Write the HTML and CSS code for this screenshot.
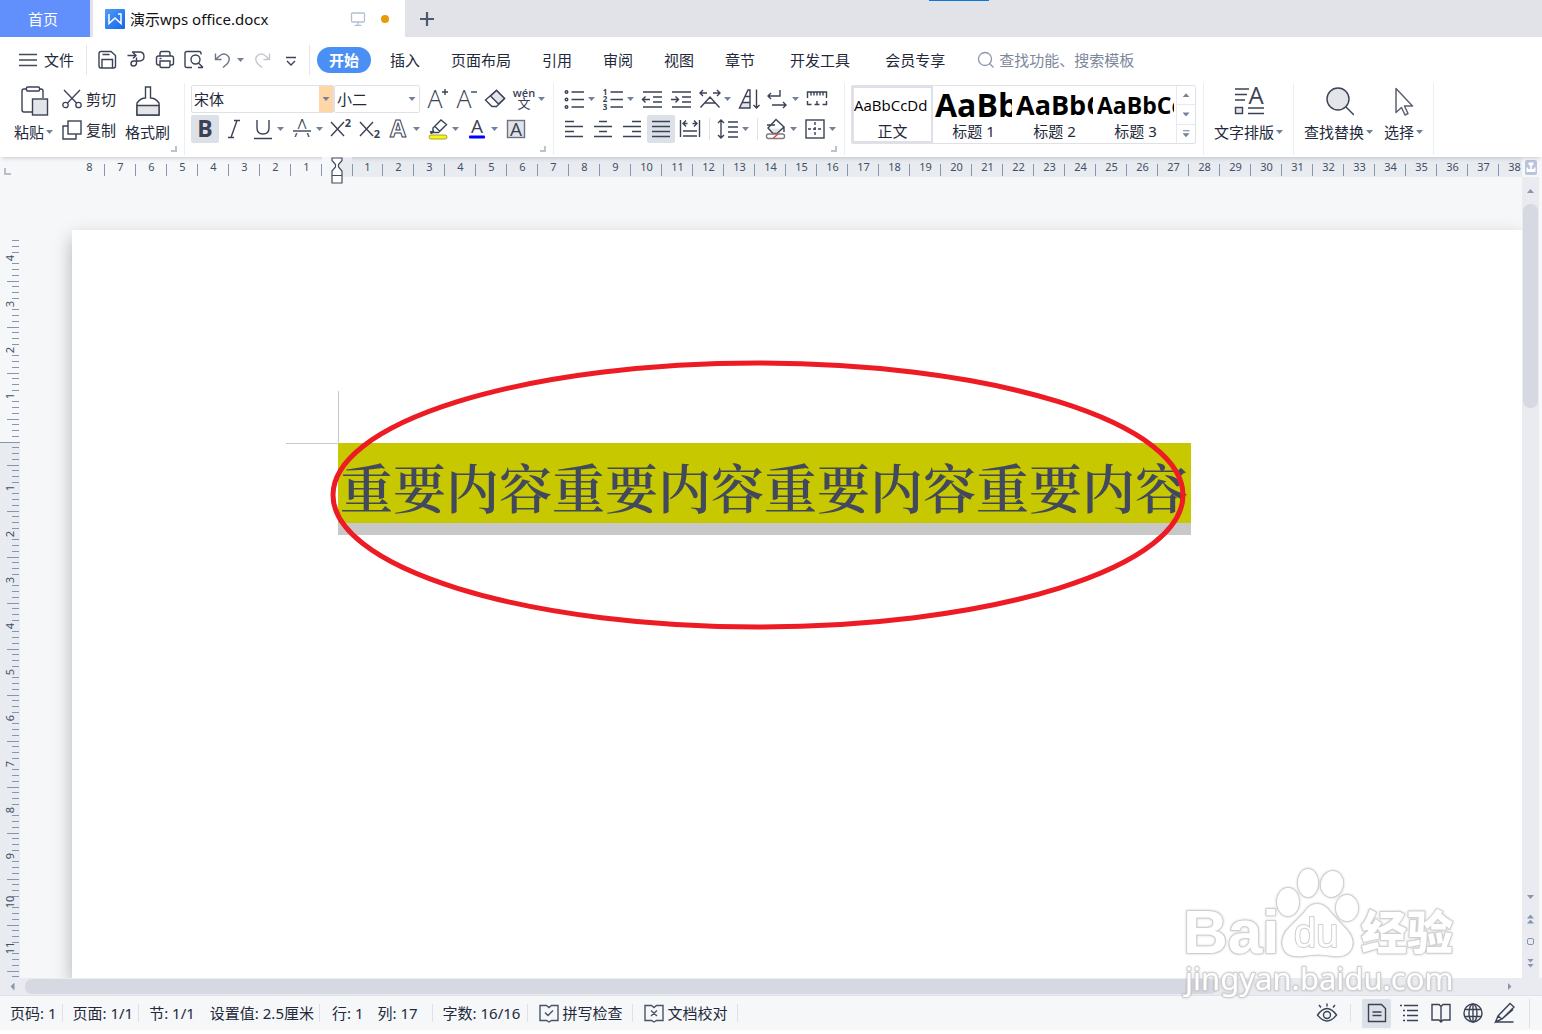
FILE: index.html
```html
<!DOCTYPE html>
<html lang="zh-CN">
<head>
  <meta charset="UTF-8">
  <meta name="viewport" content="width=device-width, initial-scale=1.0">
  <title>演示wps office.docx</title>
  <link rel="stylesheet" href="styles.css">
</head>
<body>
  <!-- 标签栏 -->
  <header class="tab-bar">
    <button class="home-tab">首页</button>
    <div class="doc-tab">
      <svg class="doc-logo" width="20" height="20" viewBox="0 0 20 20">
        <defs><linearGradient id="logoFill" x1="0" y1="0" x2="1" y2="1"><stop offset="0" stop-color="#4f9bfa"/><stop offset="1" stop-color="#1468e8"/></linearGradient></defs>
        <rect width="20" height="20" rx="1" fill="url(#logoFill)"/>
        <path d="M4 5v9.500l6-5.500 6 5.500V5h-3" fill="none" stroke="#fff" stroke-width="1.500"/>
      </svg>
      <span class="doc-name">演示wps office.docx</span>
      <svg width="16" height="16" viewBox="0 0 16 16" fill="none" stroke="#b4bfd6" stroke-width="1.300"><rect x="1.500" y="2" width="13" height="9" rx="1"/><path d="M8 11v3M4.500 14.300h7"/></svg>
      <span class="unsaved-dot"></span>
    </div>
    <button class="new-tab" aria-label="新建"><svg width="16" height="16" viewBox="0 0 16 16" stroke="#4d5871" stroke-width="2.200"><path d="M8 1v14M1 8h14"/></svg></button>
    <span class="drag-mark"></span>
  </header>

  <!-- 菜单栏 -->
  <div class="menu-bar">
    <button class="file-button">
      <svg width="18" height="14" viewBox="0 0 18 14" stroke="#444b57" stroke-width="1.300"><path d="M0 1.500h18M0 7h18M0 12.500h18"/></svg>
      文件
    </button>
    <div class="quick-tools">
      <button class="tool" aria-label="保存"><svg class="icon" viewBox="0 0 24 24"><path d="M4 5.500q0-2 2-2h10l4.500 4V18q0 2-2 2H6q-2 0-2-2zM7 20v-8.500h10.500V20M7.500 6.500h7"/></svg></button>
      <button class="tool" aria-label="输出PDF"><svg class="icon" viewBox="0 0 24 24"><path d="M3.500 7.500h8M9 4.500l3 3-3 3M8 4h7.500q4.500 0 4.500 4.500T15.500 13H10q-3 0-3 2.500t2.500 2.500 3-2.500v-6"/></svg></button>
      <button class="tool" aria-label="打印"><svg class="icon" viewBox="0 0 24 24"><path d="M7 8V5.500q0-2 2-2h6q2 0 2 2V8M7 17H5.500q-2 0-2-2v-5q0-2 2-2h13q2 0 2 2v5q0 2-2 2H17M7 13h10v5q0 1.500-1.500 1.500h-7Q7 19.500 7 18zM6.500 10.500h2"/></svg></button>
      <button class="tool" aria-label="打印预览"><svg class="icon" viewBox="0 0 24 24"><path d="M10 19.500H5q-2 0-2-2V5.500q0-2 2-2h12q2 0 2 2v1"/><circle cx="13.500" cy="11.500" r="4.500"/><path d="M16.500 15l4.500 4.500M16 19.500h5"/></svg></button>
      <button class="tool with-arrow" aria-label="撤销"><svg class="icon icon-undo" viewBox="0 0 24 24"><path d="M4.500 5.500v6h6M5 11l4-3.500Q13 4.500 16.500 7.500t0 8L12 19.500"/></svg><span class="arrow"></span></button>
      <button class="tool" aria-label="恢复"><svg class="icon icon-redo" viewBox="0 0 24 24"><path d="M19.500 5.500v6h-6M19 11l-4-3.500Q11 4.500 7.500 7.500t0 8l4.500 4"/></svg></button>
      <button class="tool" aria-label="更多"><svg class="icon" viewBox="0 0 24 24"><path d="M7 9.500h10M8 13l4 4 4-4"/></svg></button>
    </div>
    <nav class="menu-tabs">
      <button class="menu-tab active">开始</button>
      <button class="menu-tab">插入</button>
      <button class="menu-tab">页面布局</button>
      <button class="menu-tab">引用</button>
      <button class="menu-tab">审阅</button>
      <button class="menu-tab">视图</button>
      <button class="menu-tab">章节</button>
      <button class="menu-tab wide">开发工具</button>
      <button class="menu-tab wide">会员专享</button>
    </nav>
    <label class="search">
      <svg width="18" height="18" viewBox="0 0 18 18" fill="none" stroke="#8b96ab" stroke-width="1.300"><circle cx="8" cy="8" r="6.500"/><path d="M12.500 12.500l4 4"/></svg>
      <input type="text" placeholder="查找功能、搜索模板" aria-label="查找功能">
    </label>
  </div>

  <!-- 功能区 -->
  <div class="ribbon">
    <section class="group clipboard">
      <button class="big-button">
        <svg width="30" height="32" viewBox="0 0 30 32" fill="none" stroke="#3b4256" stroke-width="1.400"><path d="M7 4H5q-2 0-2 2v19q0 2 2 2h8M21 4h1q2 0 2 2v7"/><rect x="7.500" y="2" width="13" height="4" rx="1"/><rect x="13.500" y="14" width="15" height="16" fill="#e3e5e8"/></svg>
        <span class="caption">粘贴<span class="arrow"></span></span>
      </button>
      <div class="stack">
        <button class="line-button"><svg width="20" height="20" viewBox="0 0 20 20" fill="none" stroke="#3b4256" stroke-width="1.300"><circle cx="3.500" cy="16" r="2.700"/><circle cx="16.500" cy="16" r="2.700"/><path d="M2 1l12.500 13M18 1L5.500 14"/></svg>剪切</button>
        <button class="line-button"><svg width="20" height="20" viewBox="0 0 20 20" fill="none" stroke="#3b4256" stroke-width="1.400"><rect x="6" y="1" width="13" height="13"/><path d="M6 6H1v13h13v-5"/></svg>复制</button>
      </div>
      <button class="big-button">
        <svg width="30" height="32" viewBox="0 0 30 32" fill="none" stroke="#3b4256" stroke-width="1.400"><path d="M12.500 2h5v11q5 0 8.500 5v12H4V18q3.500-5 8.500-5z"/><path d="M4 20.500h22V30H4z" fill="#e3e5e8"/></svg>
        <span class="caption">格式刷</span>
      </button>
      <span class="corner"></span>
    </section>

    <section class="group font-group">
      <div class="tool-row">
        <div class="combo combo-font"><select aria-label="字体"><option>宋体</option></select><span class="combo-arrow hot"><span class="arrow"></span></span></div>
        <div class="combo combo-size"><select aria-label="字号"><option>小二</option></select><span class="combo-arrow"><span class="arrow"></span></span></div>
        <button class="tool" aria-label="增大字号"><svg class="icon" viewBox="0 0 24 24"><text class="glyph big" x="10" y="21">A</text><path d="M17 5h6M20 2v6"/></svg></button>
        <button class="tool" aria-label="减小字号"><svg class="icon" viewBox="0 0 24 24"><text class="glyph big" x="10" y="21">A</text><path d="M17 5h6"/></svg></button>
        <button class="tool" aria-label="清除格式"><svg class="icon" viewBox="0 0 24 24"><path d="M13.500 3.500l8 8-8 8H9L2.500 13z"/><path d="M13.500 3.500l8 8-6 5.500-8-8z" fill="#e3e5e8"/></svg></button>
        <button class="tool with-arrow" aria-label="拼音指南"><svg class="icon" viewBox="0 0 24 24"><text class="glyph small" x="12" y="10">wén</text><text class="glyph han" x="12" y="21">文</text></svg><span class="arrow"></span></button>
      </div>
      <div class="tool-row">
        <button class="tool pressed" aria-label="加粗"><svg class="icon" viewBox="0 0 24 24"><text class="glyph bold" x="12" y="20">B</text></svg></button>
        <button class="tool" aria-label="倾斜"><svg class="icon" viewBox="0 0 24 24"><path d="M12 3.500h6M6 20.500h6M15 3.500l-6 17"/></svg></button>
        <button class="tool with-arrow" aria-label="下划线"><svg class="icon" viewBox="0 0 24 24"><path d="M6 3v8q0 6 6 6t6-6V3M3 21.500h18"/></svg><span class="arrow"></span></button>
        <button class="tool with-arrow" aria-label="删除线"><svg class="icon" viewBox="0 0 24 24"><text class="glyph big" x="12" y="20">A</text><path class="gap-line" d="M3 14h18"/><path d="M3 14h18"/></svg><span class="arrow"></span></button>
        <button class="tool" aria-label="上标"><svg class="icon" viewBox="0 0 24 24"><path d="M2 5l13 14M15 5L2 19"/><text class="glyph mini" x="19" y="10">2</text></svg></button>
        <button class="tool" aria-label="下标"><svg class="icon" viewBox="0 0 24 24"><path d="M2 5l13 14M15 5L2 19"/><text class="glyph mini" x="19" y="21">2</text></svg></button>
        <button class="tool with-arrow" aria-label="文字效果"><svg class="icon" viewBox="0 0 24 24"><text class="glyph outline" x="11" y="20">A</text></svg><span class="arrow"></span></button>
        <button class="tool with-arrow" aria-label="突出显示"><svg class="icon" viewBox="0 0 24 24"><path d="M4 15l4-1M7 15V11l8-8 5.500 4.500-8 8H7L4.500 16.500M9 9.500l5 5"/><rect x="3" y="18" width="18" height="4" rx="2" fill="#fff600" stroke="#8a8a3c" stroke-width=".8"/></svg><span class="arrow"></span></button>
        <button class="tool with-arrow" aria-label="字体颜色"><svg class="icon" viewBox="0 0 24 24"><text class="glyph" x="12" y="16">A</text><rect x="4" y="18.500" width="16" height="3" rx="1" fill="#0000ff" stroke="none"/></svg><span class="arrow"></span></button>
        <button class="tool" aria-label="字符底纹"><svg class="icon" viewBox="0 0 24 24"><rect x="3.500" y="3.500" width="17" height="17" fill="#e0e3e7" stroke="#6d7380"/><text class="glyph" x="12" y="19">A</text></svg></button>
      </div>
      <span class="corner"></span>
    </section>

    <section class="group para-group">
      <div class="tool-row">
        <button class="tool with-arrow" aria-label="项目符号"><svg class="icon" viewBox="0 0 24 24"><circle cx="4.500" cy="5" r="1.300"/><circle cx="4.500" cy="12.500" r="1.300"/><circle cx="4.500" cy="20" r="1.300"/><path d="M9.500 5H22M9.500 12.500H22M9.500 20H22"/></svg><span class="arrow"></span></button>
        <button class="tool with-arrow" aria-label="编号"><svg class="icon" viewBox="0 0 24 24"><text class="glyph tiny" x="4" y="8">1</text><text class="glyph tiny" x="4" y="15">2</text><text class="glyph tiny" x="4" y="23">3</text><path d="M9.500 5H22M9.500 12.500H22M9.500 20H22"/></svg><span class="arrow"></span></button>
        <button class="tool" aria-label="减少缩进"><svg class="icon" viewBox="0 0 24 24"><path d="M3 5h19M13 10h9M13 15h9M3 20h19M2 12.500h8M5.500 9.500l-3 3 3 3"/></svg></button>
        <button class="tool" aria-label="增加缩进"><svg class="icon" viewBox="0 0 24 24"><path d="M3 5h19M13 10h9M13 15h9M3 20h19M2 12.500h8M6.500 9.500l3 3-3 3"/></svg></button>
        <button class="tool with-arrow" aria-label="中文版式"><svg class="icon" viewBox="0 0 24 24"><path d="M2.500 20.500L12 10l9.500 10.500M7 16h10M2 6h7M5 3L2 6l3 3M22 6h-7M19 3l3 3-3 3"/></svg><span class="arrow"></span></button>
        <button class="tool" aria-label="排序"><svg class="icon" viewBox="0 0 24 24"><path d="M5.500 15.500h7.500V21H3z" fill="#e3e5e8" stroke="none"/><path d="M13 3v18H2.500L11 3zM8.500 9.500H13M5.500 15.500H13M19.500 2.500V21M16.500 18l3 3 3-3"/></svg></button>
        <button class="tool with-arrow" aria-label="段落标记"><svg class="icon" viewBox="0 0 24 24"><path d="M14 3v6H2M5 6L2 9l3 3M6 18h14M17 15l3 3-3 3"/></svg><span class="arrow"></span></button>
        <button class="tool" aria-label="制表位"><svg class="icon" viewBox="0 0 24 24"><path d="M2.500 11V5h19v6M6 5v3.500M9 5v3.500M12 5v3.500M15 5v3.500M18 5v3.500M2.500 14v3.500h4M9.500 17.500h5M12 17.500V14M17.500 17.500h4V14"/></svg></button>
      </div>
      <div class="tool-row">
        <button class="tool" aria-label="左对齐"><svg class="icon" viewBox="0 0 24 24"><path d="M3 4.500h9M3 9.500h18M3 14.500h9M3 19.500h18"/></svg></button>
        <button class="tool" aria-label="居中"><svg class="icon" viewBox="0 0 24 24"><path d="M8 4.500h8M3 9.500h18M8 14.500h8M3 19.500h18"/></svg></button>
        <button class="tool" aria-label="右对齐"><svg class="icon" viewBox="0 0 24 24"><path d="M12 4.500h9M3 9.500h18M12 14.500h9M3 19.500h18"/></svg></button>
        <button class="tool pressed" aria-label="两端对齐"><svg class="icon" viewBox="0 0 24 24"><path d="M3 4.500h18M3 9.500h18M3 14.500h18M3 19.500h18"/></svg></button>
        <button class="tool" aria-label="分散对齐"><svg class="icon" viewBox="0 0 24 24"><path d="M2.500 3v17M21.500 3v17M5 14h14M5 19h14M5.500 6.500h4M14.500 6.500h4M8 3.500l-3 3 3 3M16 3.500l3 3-3 3"/></svg></button>
        <span class="tool-divider"></span>
        <button class="tool with-arrow" aria-label="行距"><svg class="icon" viewBox="0 0 24 24"><path d="M5 3v18M2 6l3-3 3 3M2 18l3 3 3-3M12 5h10M12 10h10M12 15h10M12 20h10"/></svg><span class="arrow"></span></button>
        <span class="tool-divider"></span>
        <button class="tool with-arrow" aria-label="底纹颜色"><svg class="icon" viewBox="0 0 24 24"><path d="M5 11.500h14l-6 5H9z" fill="#e3e5e8" stroke="none"/><path d="M12 2.500l8 7.500-7 6.500H9L4 11zM3 8h8M20 10v5"/><rect x="2.500" y="17" width="18" height="4.500" rx="2" stroke="#7b7b7b"/><path d="M9 21.500l5-4.500" stroke="#ed3b3b"/></svg><span class="arrow"></span></button>
        <button class="tool with-arrow" aria-label="边框"><svg class="icon" viewBox="0 0 24 24"><rect x="3" y="3" width="18" height="18"/><path d="M12 5v14M5 12h14" stroke-dasharray="3 2"/></svg><span class="arrow"></span></button>
      </div>
      <span class="corner"></span>
    </section>

    <section class="group">
      <div class="gallery">
        <button class="style-item selected"><span class="sample">AaBbCcDd</span><span class="style-name">正文</span></button>
        <button class="style-item"><span class="sample h1">AaBb</span><span class="style-name">标题 1</span></button>
        <button class="style-item"><span class="sample h2">AaBbC</span><span class="style-name">标题 2</span></button>
        <button class="style-item"><span class="sample h3">AaBbCc</span><span class="style-name">标题 3</span></button>
        <div class="gallery-nav">
          <button aria-label="上一行"><span class="arrow up"></span></button>
          <button aria-label="下一行"><span class="arrow"></span></button>
          <button aria-label="展开"><span class="arrow lined"></span></button>
        </div>
      </div>
    </section>

    <section class="group tools-group">
      <button class="big-button">
        <svg width="30" height="32" viewBox="0 0 30 32" fill="none" stroke="#3b4256" stroke-width="1.400"><path d="M1 4h14M1 9.500h12M1 15h10M14 23h16M14 28.500h16"/><rect x="1.500" y="22.500" width="7" height="6" fill="#e3e5e8"/><text class="glyph large" x="22" y="19">A</text></svg>
        <span class="caption">文字排版<span class="arrow"></span></span>
      </button>
    </section>
    <section class="group tools-group">
      <button class="big-button">
        <svg width="30" height="32" viewBox="0 0 30 32" stroke="#3b4256" stroke-width="1.400"><circle cx="14" cy="14" r="11" fill="#e3e5e8"/><path d="M22 22l8 8"/></svg>
        <span class="caption">查找替换<span class="arrow"></span></span>
      </button>
      <button class="big-button">
        <svg width="30" height="32" viewBox="0 0 30 32" fill="none" stroke="#5b6272" stroke-width="1.500" stroke-linejoin="round"><path d="M7 3.500v24l5.500-5 3.500 7.500 3-1.500-3.500-7.500h8z"/></svg>
        <span class="caption">选择<span class="arrow"></span></span>
      </button>
    </section>
  </div>

  <!-- 水平标尺 -->
  <div class="h-ruler">
    <div class="ruler-left" id="rulerLeft"></div>
    <div class="ruler-zero">
      <svg width="12" height="27" viewBox="0 0 12 27" fill="#fff" stroke="#444b5e" stroke-width="1.200"><path d="M1 1h10v2.500L7.500 7.500v2.500L11 14v12H1V14l3.500-4V7.500L1 3.500zM1 18.500h10"/></svg>
    </div>
    <div class="ruler-right" id="rulerRight"></div>
    <div class="ruler-end"><svg width="12" height="15" viewBox="0 0 12 15"><rect width="12" height="15" rx="2" fill="#b9c3da"/><path d="M3.500 2.500h5v2L6.800 6v3H9V7.500h1.500v4.500h-9V7.500H3V9h2.200V6L3.500 4.500z" fill="#fff"/></svg></div>
  </div>

  <!-- 编辑区 -->
  <div class="workspace">
    <svg class="v-ruler" id="verticalRuler" aria-hidden="true"></svg>
    <main class="canvas">
      <article class="page">
        <p class="doc-line">重要内容重要内容重要内容重要内容
          <svg class="ring" viewBox="0 0 860 272" preserveAspectRatio="none"><ellipse cx="430" cy="136" rx="425" ry="132"/></svg>
        </p>
      </article>
    </main>
    <div class="v-scroll">
      <button aria-label="向上滚动"><span class="arrow up"></span></button>
      <div class="v-thumb"></div>
      <div class="v-buttons">
        <button aria-label="向下滚动"><span class="arrow"></span></button>
        <button aria-label="上一页"><span class="arrow up"></span><span class="arrow up"></span></button>
        <button aria-label="选择浏览对象"><span class="square"></span></button>
        <button aria-label="下一页"><span class="arrow"></span><span class="arrow"></span></button>
      </div>
    </div>
    <svg class="watermark" viewBox="0 0 290 140">
      <text class="mark-bai" x="5" y="86">Bai</text>
      <ellipse cx="110" cy="35" rx="11" ry="14"/>
      <ellipse cx="130" cy="16" rx="10" ry="14"/>
      <ellipse cx="154" cy="17" rx="11" ry="13" transform="rotate(12 154 17)"/>
      <ellipse cx="169" cy="41" rx="11" ry="13"/>
      <path d="M139 37q8 0 14 9l12 13q12 11 9 21-4 11-19 9-16-3-30 0-17 2-20-9-3-11 8-21l13-13q5-9 13-9z"/>
      <text class="mark-du" x="116" y="80">du</text>
      <text class="mark-cn" x="183" y="82">经验</text>
      <text class="mark-url" x="7" y="123">jingyan.baidu.com</text>
    </svg>
  </div>
  <div class="h-scroll">
    <button aria-label="向左滚动"><span class="arrow left"></span></button>
    <div class="h-track"><div class="h-thumb"></div></div>
    <button class="h-right" aria-label="向右滚动"><span class="arrow right"></span></button>
  </div>

  <!-- 状态栏 -->
  <footer class="status-bar">
    <span class="status-item">页码: 1</span>
    <span class="status-item">页面: 1/1</span>
    <span class="status-item plain">节: 1/1</span>
    <span class="status-item">设置值: 2.5厘米</span>
    <span class="status-item plain row-no">行: 1</span>
    <span class="status-item col-no">列: 17</span>
    <span class="status-item words">字数: 16/16</span>
    <button class="status-item check"><svg width="20" height="20" viewBox="0 0 20 20"><path d="M1 2.500h6.500L10 4.500l2.500-2H19v15h-6.500L10 19l-2.500-1.500H1zM6 9.500l3 3 5-5"/></svg>拼写检查</button>
    <button class="status-item check"><svg width="20" height="20" viewBox="0 0 20 20"><path d="M1 2.500h6.500L10 4.500l2.500-2H19v15h-6.500L10 19l-2.500-1.500H1zM7 7.500l6 5.500M13 7.500L7 13"/></svg>文档校对</button>
    <div class="view-buttons">
      <button class="eye" aria-label="护眼模式"><svg class="icon" viewBox="0 0 24 24"><path d="M2.500 14q9.500-13 19 0-9.500 12-19 0zM12 2.500v3M4 4l2 2.500M20 4l-2 2.500"/><circle cx="12" cy="14" r="3.500"/></svg></button>
      <button class="pressed" aria-label="页面视图"><svg class="icon" viewBox="0 0 24 24"><path d="M3.500 3.500h13l4 4v13h-17zM7.500 11h9M7.500 14.500h9"/></svg></button>
      <button aria-label="大纲"><svg class="icon" viewBox="0 0 24 24"><path d="M3 4.500h2M7 4.500h14M6 9.500h2M10 9.500h11M6 14.500h2M10 14.500h11M6 19.500h2M10 19.500h11"/></svg></button>
      <button aria-label="阅读版式"><svg class="icon" viewBox="0 0 24 24"><path d="M3 3.500h7l2 2 2-2h7v15.500h-7l-2 2-2-2H3zM12 5.500V21"/></svg></button>
      <button aria-label="Web版式"><svg class="icon" viewBox="0 0 24 24"><circle cx="12" cy="12" r="9"/><ellipse cx="12" cy="12" rx="4" ry="9"/><path d="M4 8.500h16M4 15.500h16M12 3v18"/></svg></button>
      <button aria-label="写作模式"><svg class="icon" viewBox="0 0 24 24"><path d="M2.500 21l2.500-6L17 2.500l4 3.500L9 18zM5 15l4 3M9 18l11-9.500M2.500 21h18"/></svg></button>
    </div>
  </footer>

  <script>
    /* 水平标尺刻度 */
    function addCell(parent, n) {
      const cell = document.createElement("span");
      cell.className = "ruler-cell";
      cell.textContent = n;
      parent.appendChild(cell);
    }
    const rulerLeft = document.getElementById("rulerLeft");
    const rulerRight = document.getElementById("rulerRight");
    for (let n = 8; n >= 1; n--) addCell(rulerLeft, n);
    for (let n = 1; n <= 38; n++) addCell(rulerRight, n);

    /* 垂直标尺：每个单位46像素，零点在265 */
    const unit = 46;
    const zero = 265;
    let marks = '<rect class="v-body" x="0" y="' + zero + '" width="20" height="100%"/>';
    for (let i = -35; i <= 93; i++) {
      const pos = i % 8;
      const y = zero + Math.floor(i * unit / 8);
      if (i === 0) {
        marks += '<rect x="0" y="' + y + '" width="20" height="1"/>';
      } else if (Math.abs(pos) === 4) {
        marks += '<rect x="7" y="' + y + '" width="12" height="1"/>';
      } else if (pos === 0) {
        marks += '<text transform="translate(14 ' + y + ') rotate(-90)">' + Math.abs(i / 8) + '</text>';
      } else {
        marks += '<rect x="12" y="' + y + '" width="7" height="1"/>';
      }
    }
    document.getElementById("verticalRuler").innerHTML = marks;
  </script>
</body>
</html>
```
FILE: styles.css
```css
* {
  box-sizing: border-box;
}
body {
  margin: 0;
  height: 100vh;
  padding-bottom: 4px;
  display: flex;
  flex-direction: column;
  overflow: hidden;
  font-family: "Noto Sans", "Noto Sans CJK SC", sans-serif;
  font-size: 15px;
  line-height: 20px;
  color: #23293a;
  background-color: #fff;
}
button {
  display: flex;
  align-items: center;
  justify-content: center;
  padding: 0;
  border: none;
  background: none;
  font: inherit;
  color: inherit;
  white-space: nowrap;
  cursor: pointer;
}
svg {
  display: block;
  flex: none;
}

/* 标签栏 */
.tab-bar {
  position: relative;
  display: flex;
  height: 37px;
  flex: none;
  background-color: #e2e3e8;
}
.home-tab {
  width: 90px;
  margin-right: 3px;
  padding-right: 4px;
  color: #fff;
  background-color: #618ffb;
}
.doc-tab {
  width: 312px;
  display: flex;
  align-items: center;
  padding: 0 16px 0 12px;
  background-color: #fff;
  color: #111;
}
.doc-name {
  flex: 1;
  margin-left: 5px;
}
.unsaved-dot {
  width: 8px;
  height: 8px;
  margin-left: 15px;
  border-radius: 50%;
  background-color: #e69a05;
}
.new-tab {
  width: 43px;
}
.drag-mark {
  position: absolute;
  top: 0;
  left: 929px;
  width: 60px;
  height: 1px;
  background-color: #0a78d6;
}

/* 菜单栏 */
.menu-bar {
  display: flex;
  align-items: center;
  height: 46px;
  flex: none;
}
.file-button {
  gap: 7px;
  width: 87px;
  height: 30px;
  padding-left: 7px;
  border-right: 1px solid #e3e5ea;
}
.quick-tools {
  display: flex;
  align-items: center;
  width: 223px;
  height: 30px;
  padding-left: 6px;
  border-right: 1px solid #e3e5ea;
}
.menu-tabs {
  display: flex;
  align-items: center;
  gap: 31px;
  padding-left: 7px;
}
.menu-tab.active {
  height: 26px;
  padding: 0 12px;
  margin-right: -12px;
  border-radius: 13px;
  color: #fff;
  font-weight: bold;
  background-color: #4a8ff3;
}
.menu-tab.wide {
  margin-left: 4px;
}
.search {
  display: flex;
  align-items: center;
  gap: 4px;
  margin-left: 32px;
}
.search input {
  width: 160px;
  padding: 0;
  border: none;
  outline: none;
  font: inherit;
}
.search input::placeholder {
  color: #7d879b;
  opacity: 1;
}

/* 功能区 */
.ribbon {
  position: relative;
  z-index: 1;
  display: flex;
  height: 74px;
  flex: none;
  background-color: #fff;
  box-shadow: 0 3px 4px -2px rgba(60, 70, 90, 0.25);
}
.group {
  position: relative;
  padding: 2px 7px 0 6px;
  border-right: 1px solid #eceef1;
  background-color: #fff;
  height: 72px;
}
.clipboard {
  display: flex;
  gap: 9px;
  width: 185px;
  padding-left: 14px;
}
.font-group {
  width: 369px;
  padding: 1px 0 0 6px;
}
.para-group {
  width: 291px;
  padding: 1px 0 0 6px;
}
.tools-group {
  display: flex;
  gap: 11px;
  padding: 2px 10px;
}
.corner {
  position: absolute;
  right: 7px;
  bottom: 3px;
  width: 6px;
  height: 6px;
  border-right: 2px solid #bcc3d0;
  border-bottom: 2px solid #bcc3d0;
}
.arrow {
  flex: none;
  width: 7px;
  height: 4px;
  background-color: #74819a;
  clip-path: polygon(0 0, 100% 0, 50% 100%);
}
.arrow.up {
  clip-path: polygon(0 100%, 100% 100%, 50% 0);
}
.arrow.left,
.arrow.right {
  width: 4px;
  height: 8px;
  clip-path: polygon(100% 0, 100% 100%, 0 50%);
}
.arrow.right {
  clip-path: polygon(0 0, 0 100%, 100% 50%);
}
.arrow.lined {
  height: 7px;
  clip-path: polygon(0 0, 100% 0, 100% 1px, 0 1px, 0 3px, 100% 3px, 50% 100%, 0 3px);
}
.big-button {
  flex-direction: column;
  justify-content: flex-start;
  gap: 5px;
}
.caption {
  display: flex;
  align-items: center;
  gap: 2px;
}
.stack {
  display: flex;
  flex-direction: column;
  gap: 11px;
  padding-top: 4px;
}
.line-button {
  gap: 4px;
}

/* 工具按钮 */
.tool-row {
  display: flex;
  align-items: center;
  height: 30px;
}
.tool {
  width: 28px;
  height: 28px;
  margin-right: 1px;
  flex: none;
}
.tool.with-arrow {
  width: 38px;
  justify-content: flex-start;
  padding-left: 2px;
  gap: 2px;
}
.tool.pressed,
.view-buttons .pressed {
  background-color: #dce1e7;
  border-radius: 2px;
}
.icon {
  width: 24px;
  height: 24px;
  fill: none;
  stroke: #3b4256;
  stroke-width: 1.4;
  overflow: visible;
}
.icon-undo {
  stroke: #6c7385;
}
.icon-redo {
  stroke: #c3c6cc;
}
.gap-line {
  stroke: #fff;
  stroke-width: 4;
}
.glyph {
  font-family: "Open Sans", "Noto Sans CJK SC", sans-serif;
  font-size: 19px;
  text-anchor: middle;
  fill: #3b4256;
  stroke: none;
}
.glyph.big {
  font-size: 25px;
  font-weight: 300;
}
.glyph.large {
  font-size: 24px;
}
.glyph.bold {
  font-size: 23px;
  font-weight: 700;
}
.glyph.outline {
  font-size: 23px;
  font-weight: 700;
  fill: #fff;
  stroke: #3b4256;
  stroke-width: 1;
}
.glyph.small {
  font-size: 11px;
  font-weight: 600;
}
.glyph.han {
  font-size: 13px;
}
.glyph.mini {
  font-size: 11px;
  font-weight: 700;
}
.glyph.tiny {
  font-size: 8px;
  font-weight: 700;
}
.tool-divider {
  width: 1px;
  height: 22px;
  margin: 0 4px;
  background-color: #e0e2e7;
}
.combo {
  display: flex;
  flex: none;
  height: 28px;
  border: 1px solid #dfe1e6;
  border-radius: 2px;
}
.combo-font {
  width: 143px;
}
.combo-size {
  width: 86px;
  margin-right: 3px;
}
.combo select {
  flex: 1;
  min-width: 0;
  padding: 0 2px;
  border: none;
  outline: none;
  appearance: none;
  font: inherit;
  color: inherit;
  background: none;
}
.combo-arrow {
  display: flex;
  align-items: center;
  justify-content: center;
  width: 14px;
}
.combo-arrow.hot {
  background-color: #ffd6a6;
}

/* 样式库 */
.gallery {
  display: flex;
  height: 59px;
  border: 1px solid #dfe1e6;
  border-radius: 2px;
}
.style-item {
  flex-direction: column;
  width: 81px;
  padding: 0 2px;
}
.style-item.selected {
  border: 2px solid #dfe0e7;
  padding: 0;
}
.sample {
  width: 77px;
  height: 32px;
  line-height: 32px;
  overflow: hidden;
  text-align: left;
  font-family: "Open Sans", sans-serif;
  font-size: 15px;
  color: #000;
}
.sample.h1 {
  font-size: 32px;
  font-weight: bold;
}
.sample.h2 {
  font-size: 27px;
  font-weight: bold;
}
.sample.h3 {
  font-size: 23px;
  font-weight: bold;
}
.gallery-nav {
  display: flex;
  flex-direction: column;
  width: 19px;
  border-left: 1px solid #e8e9ed;
}
.gallery-nav button {
  flex: 1;
}
.gallery-nav button + button {
  border-top: 1px solid #e8e9ed;
}

/* 水平标尺 */
.h-ruler {
  display: flex;
  height: 20px;
  flex: none;
  background-color: #f5f7f9;
  font-family: "Noto Sans", sans-serif;
  font-size: 11px;
  color: #444f66;
}
.ruler-left {
  display: flex;
  width: 322px;
  padding-left: 74px;
  background: linear-gradient(#b9bfca, #b9bfca) 4px 16px / 7px 2px no-repeat,
    linear-gradient(#b9bfca, #b9bfca) 4px 11px / 2px 7px no-repeat;
}
.ruler-zero {
  width: 30px;
  display: flex;
  justify-content: center;
  background: linear-gradient(to right, #f5f7f9 50%, #e8ebf0 50%);
  position: relative;
  z-index: 2;
}
.ruler-right {
  display: flex;
  flex: 1;
  min-width: 0;
  overflow: hidden;
  background-color: #e8ebf0;
}
.ruler-cell {
  width: 31px;
  flex: none;
  text-align: center;
  background: linear-gradient(#8795b0, #8795b0) right 7px / 1px 12px no-repeat;
}
.ruler-right .ruler-cell:first-child {
  background: linear-gradient(#8795b0, #8795b0) right 7px / 1px 12px no-repeat,
    linear-gradient(#8795b0, #8795b0) left 7px / 1px 12px no-repeat;
}
.ruler-end {
  display: flex;
  align-items: center;
  justify-content: center;
  width: 20px;
  padding-right: 3px;
}

/* 编辑区 */
.workspace {
  position: relative;
  display: flex;
  flex: 1;
  min-height: 0;
  background-color: #f5f7f9;
}
.v-ruler {
  width: 20px;
  height: 100%;
  overflow: hidden;
  fill: #8795b0;
}
.v-ruler .v-body {
  fill: #e8ebf0;
}
.v-ruler text {
  font-family: "Noto Sans", sans-serif;
  font-size: 11px;
  text-anchor: middle;
  fill: #444f66;
}
.canvas {
  display: flex;
  flex: 1;
  min-width: 0;
  padding: 53px 0 0 52px;
  overflow: hidden;
}
.page {
  flex: 1;
  min-width: 0;
  padding: 213px 0 0 266px;
  background-color: #fff;
  box-shadow: 0 8px 18px rgba(0, 0, 0, 0.28);
}
.doc-line {
  position: relative;
  display: inline-block;
  margin: 0;
  padding: 6px 3px 0 2px;
  border-bottom: 12px solid #c8c8c8;
  background-color: #c8c800;
  background-clip: padding-box;
  color: #42495c;
  font-family: "Noto Serif CJK SC", SimSun, "Noto Sans CJK SC", serif;
  font-size: 53px;
  font-weight: 600;
  line-height: 74px;
  height: 92px;
  white-space: nowrap;
}
/* 页边角标 */
.doc-line::before {
  content: "";
  position: absolute;
  left: -52px;
  top: -52px;
  width: 52px;
  height: 52px;
  border-right: 1px solid #c8c8c8;
  border-bottom: 1px solid #c8c8c8;
}
.ring {
  position: absolute;
  left: -10px;
  top: -84px;
  width: 860px;
  height: 272px;
  fill: none;
  stroke: #ed1c24;
  stroke-width: 5;
}

/* 滚动条 */
.v-scroll {
  display: flex;
  flex-direction: column;
  width: 17px;
  margin-right: 3px;
  padding-top: 3px;
  background-color: #e9ebf0;
}
.v-scroll button {
  flex-direction: column;
  height: 22px;
  gap: 1px;
}
.v-scroll .arrow,
.h-scroll .arrow {
  background-color: #8796b2;
}
.v-thumb {
  width: 15px;
  height: 204px;
  margin: 2px auto 0;
  border-radius: 7px;
  background-color: #d6d9e1;
}
.v-buttons {
  margin-top: auto;
  padding-bottom: 4px;
}
.v-buttons button {
  width: 100%;
}
.square {
  width: 7px;
  height: 7px;
  border: 1px solid #8796b2;
  border-radius: 2px;
}
.h-scroll {
  display: flex;
  align-items: center;
  height: 17px;
  flex: none;
  padding-right: 20px;
  background-color: #e9ebf0;
}
.h-scroll button {
  width: 25px;
  height: 17px;
}
.h-track {
  flex: 1;
}
.h-thumb {
  width: 81%;
  height: 15px;
  border-radius: 7px;
  background-color: #d6d9e1;
}

/* 水印 */
.watermark {
  position: absolute;
  right: 74px;
  bottom: -29px;
  width: 290px;
  height: 140px;
  z-index: 1;
  fill: #fff;
  stroke: #d0d0d0;
  stroke-width: 2;
  paint-order: stroke;
  stroke-linejoin: round;
  filter: drop-shadow(0 0 1px rgba(0, 0, 0, 0.2));
  pointer-events: none;
}
.mark-bai {
  font: bold 62px "Liberation Sans", sans-serif;
}
.mark-du {
  font: 40px "Liberation Sans", sans-serif;
}
.mark-cn {
  font: 900 46px "Noto Sans CJK SC", sans-serif;
}
.mark-url {
  font: 31px "Noto Sans", sans-serif;
}

/* 状态栏 */
.status-bar {
  display: flex;
  align-items: center;
  height: 35px;
  flex: none;
  border-top: 1px solid #dfe2e7;
  background-color: #f5f7f9;
}
.status-item {
  display: flex;
  align-items: center;
  height: 18px;
  padding: 0 5px 0 10px;
  border-right: 1px solid #dfe1e6;
  white-space: nowrap;
}
.status-item.plain {
  border-right: none;
}
.status-item.row-no {
  padding: 0 4px 0 12px;
}
.status-item.col-no {
  padding-right: 14px;
}
.status-item.words {
  padding-right: 7px;
}
.status-item.check {
  gap: 3px;
  padding: 0 10px 0 11px;
}
.check svg {
  fill: none;
  stroke: #4a5369;
  stroke-width: 1.4;
}
.view-buttons {
  display: flex;
  align-items: center;
  gap: 3px;
  margin-left: auto;
  margin-right: 12px;
  padding-right: 10px;
  border-right: 1px solid #dfe1e6;
}
.view-buttons button {
  width: 29px;
  height: 29px;
}
.view-buttons .eye {
  width: 38px;
  height: 18px;
  margin-right: 8px;
  padding-right: 9px;
  border-right: 1px solid #dfe1e6;
}
```
